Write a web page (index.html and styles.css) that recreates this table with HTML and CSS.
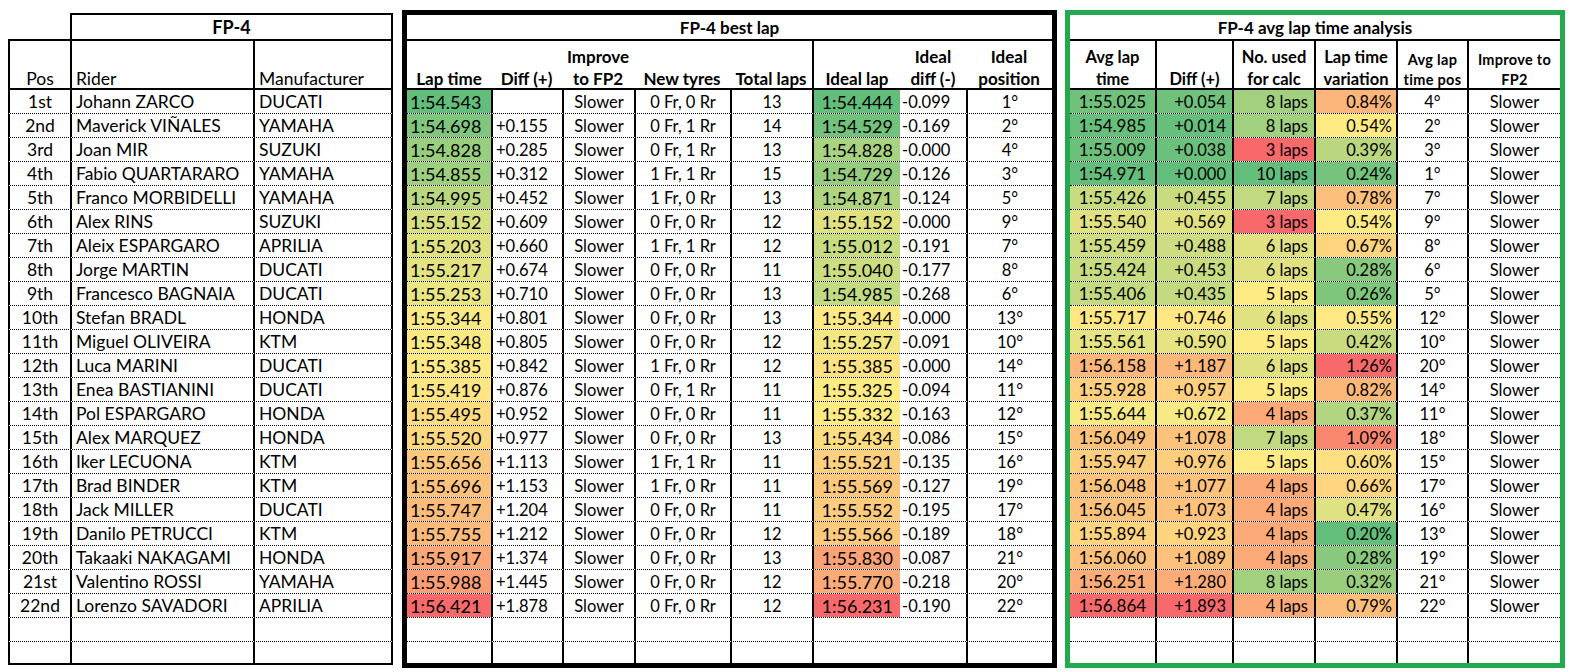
FILE: index.html
```html
<!DOCTYPE html>
<html lang="en">
<head>
<meta charset="utf-8">
<title>FP-4 analysis</title>
<link rel="stylesheet" href="styles.css">
</head>
<body>
<div class="sheet">

  <section class="panel left">
    <div class="row trow">
      <div class="c blank"></div>
      <div class="c ttl">FP-4</div>
    </div>
    <div class="row hrow">
      <div class="c h ctr"><span>Pos</span></div>
      <div class="c h vl pl"><span>Rider</span></div>
      <div class="c h vl pl"><span>Manufacturer</span></div>
    </div>
    <div class="row d"><div class="c ctr">1st</div><div class="c vl pl">Johann ZARCO</div><div class="c vl pl">DUCATI</div></div>
    <div class="row d"><div class="c ctr">2nd</div><div class="c vl pl">Maverick VIÑALES</div><div class="c vl pl">YAMAHA</div></div>
    <div class="row d"><div class="c ctr">3rd</div><div class="c vl pl">Joan MIR</div><div class="c vl pl">SUZUKI</div></div>
    <div class="row d"><div class="c ctr">4th</div><div class="c vl pl">Fabio QUARTARARO</div><div class="c vl pl">YAMAHA</div></div>
    <div class="row d"><div class="c ctr">5th</div><div class="c vl pl">Franco MORBIDELLI</div><div class="c vl pl">YAMAHA</div></div>
    <div class="row d"><div class="c ctr">6th</div><div class="c vl pl">Alex RINS</div><div class="c vl pl">SUZUKI</div></div>
    <div class="row d"><div class="c ctr">7th</div><div class="c vl pl">Aleix ESPARGARO</div><div class="c vl pl">APRILIA</div></div>
    <div class="row d"><div class="c ctr">8th</div><div class="c vl pl">Jorge MARTIN</div><div class="c vl pl">DUCATI</div></div>
    <div class="row d"><div class="c ctr">9th</div><div class="c vl pl">Francesco BAGNAIA</div><div class="c vl pl">DUCATI</div></div>
    <div class="row d"><div class="c ctr">10th</div><div class="c vl pl">Stefan BRADL</div><div class="c vl pl">HONDA</div></div>
    <div class="row d"><div class="c ctr">11th</div><div class="c vl pl">Miguel OLIVEIRA</div><div class="c vl pl">KTM</div></div>
    <div class="row d"><div class="c ctr">12th</div><div class="c vl pl">Luca MARINI</div><div class="c vl pl">DUCATI</div></div>
    <div class="row d"><div class="c ctr">13th</div><div class="c vl pl">Enea BASTIANINI</div><div class="c vl pl">DUCATI</div></div>
    <div class="row d"><div class="c ctr">14th</div><div class="c vl pl">Pol ESPARGARO</div><div class="c vl pl">HONDA</div></div>
    <div class="row d"><div class="c ctr">15th</div><div class="c vl pl">Alex MARQUEZ</div><div class="c vl pl">HONDA</div></div>
    <div class="row d"><div class="c ctr">16th</div><div class="c vl pl">Iker LECUONA</div><div class="c vl pl">KTM</div></div>
    <div class="row d"><div class="c ctr">17th</div><div class="c vl pl">Brad BINDER</div><div class="c vl pl">KTM</div></div>
    <div class="row d"><div class="c ctr">18th</div><div class="c vl pl">Jack MILLER</div><div class="c vl pl">DUCATI</div></div>
    <div class="row d"><div class="c ctr">19th</div><div class="c vl pl">Danilo PETRUCCI</div><div class="c vl pl">KTM</div></div>
    <div class="row d"><div class="c ctr">20th</div><div class="c vl pl">Takaaki NAKAGAMI</div><div class="c vl pl">HONDA</div></div>
    <div class="row d"><div class="c ctr">21st</div><div class="c vl pl">Valentino ROSSI</div><div class="c vl pl">YAMAHA</div></div>
    <div class="row d"><div class="c ctr">22nd</div><div class="c vl pl">Lorenzo SAVADORI</div><div class="c vl pl">APRILIA</div></div>
    <div class="row d"><div class="c"></div><div class="c vl"></div><div class="c vl"></div></div>
    <div class="row d end"><div class="c"></div><div class="c vl"></div><div class="c vl"></div></div>
  </section>

  <section class="panel mid">
    <div class="row trow"><div class="c ttl span-all">FP-4 best lap</div></div>
    <div class="row hrow">
      <div class="c h"><span>Lap time</span></div>
      <div class="c h"><span>Diff (+)</span></div>
      <div class="c h"><span>Improve<br>to FP2</span></div>
      <div class="c h"><span>New tyres</span></div>
      <div class="c h"><span>Total laps</span></div>
      <div class="c h vl"><span>Ideal lap</span></div>
      <div class="c h"><span>Ideal<br>diff (-)</span></div>
      <div class="c h"><span>Ideal<br>position</span></div>
    </div>
    <div class="row d"><div class="c lt" data-g="lt">1:54.543</div><div class="c vl df"></div><div class="c vl ctr">Slower</div><div class="c vl ctr">0 Fr, 0 Rr</div><div class="c vl ctr">13</div><div class="c vl il" data-g="il">1:54.444</div><div class="c idf">-0.099</div><div class="c vl ctr">1°</div></div>
    <div class="row d"><div class="c lt" data-g="lt">1:54.698</div><div class="c vl df">+0.155</div><div class="c vl ctr">Slower</div><div class="c vl ctr">0 Fr, 1 Rr</div><div class="c vl ctr">14</div><div class="c vl il" data-g="il">1:54.529</div><div class="c idf">-0.169</div><div class="c vl ctr">2°</div></div>
    <div class="row d"><div class="c lt" data-g="lt">1:54.828</div><div class="c vl df">+0.285</div><div class="c vl ctr">Slower</div><div class="c vl ctr">0 Fr, 1 Rr</div><div class="c vl ctr">13</div><div class="c vl il" data-g="il">1:54.828</div><div class="c idf">-0.000</div><div class="c vl ctr">4°</div></div>
    <div class="row d"><div class="c lt" data-g="lt">1:54.855</div><div class="c vl df">+0.312</div><div class="c vl ctr">Slower</div><div class="c vl ctr">1 Fr, 1 Rr</div><div class="c vl ctr">15</div><div class="c vl il" data-g="il">1:54.729</div><div class="c idf">-0.126</div><div class="c vl ctr">3°</div></div>
    <div class="row d"><div class="c lt" data-g="lt">1:54.995</div><div class="c vl df">+0.452</div><div class="c vl ctr">Slower</div><div class="c vl ctr">1 Fr, 0 Rr</div><div class="c vl ctr">13</div><div class="c vl il" data-g="il">1:54.871</div><div class="c idf">-0.124</div><div class="c vl ctr">5°</div></div>
    <div class="row d"><div class="c lt" data-g="lt">1:55.152</div><div class="c vl df">+0.609</div><div class="c vl ctr">Slower</div><div class="c vl ctr">0 Fr, 0 Rr</div><div class="c vl ctr">12</div><div class="c vl il" data-g="il">1:55.152</div><div class="c idf">-0.000</div><div class="c vl ctr">9°</div></div>
    <div class="row d"><div class="c lt" data-g="lt">1:55.203</div><div class="c vl df">+0.660</div><div class="c vl ctr">Slower</div><div class="c vl ctr">1 Fr, 1 Rr</div><div class="c vl ctr">12</div><div class="c vl il" data-g="il">1:55.012</div><div class="c idf">-0.191</div><div class="c vl ctr">7°</div></div>
    <div class="row d"><div class="c lt" data-g="lt">1:55.217</div><div class="c vl df">+0.674</div><div class="c vl ctr">Slower</div><div class="c vl ctr">0 Fr, 0 Rr</div><div class="c vl ctr">11</div><div class="c vl il" data-g="il">1:55.040</div><div class="c idf">-0.177</div><div class="c vl ctr">8°</div></div>
    <div class="row d"><div class="c lt" data-g="lt">1:55.253</div><div class="c vl df">+0.710</div><div class="c vl ctr">Slower</div><div class="c vl ctr">0 Fr, 0 Rr</div><div class="c vl ctr">13</div><div class="c vl il" data-g="il">1:54.985</div><div class="c idf">-0.268</div><div class="c vl ctr">6°</div></div>
    <div class="row d"><div class="c lt" data-g="lt">1:55.344</div><div class="c vl df">+0.801</div><div class="c vl ctr">Slower</div><div class="c vl ctr">0 Fr, 0 Rr</div><div class="c vl ctr">13</div><div class="c vl il" data-g="il">1:55.344</div><div class="c idf">-0.000</div><div class="c vl ctr">13°</div></div>
    <div class="row d"><div class="c lt" data-g="lt">1:55.348</div><div class="c vl df">+0.805</div><div class="c vl ctr">Slower</div><div class="c vl ctr">0 Fr, 0 Rr</div><div class="c vl ctr">12</div><div class="c vl il" data-g="il">1:55.257</div><div class="c idf">-0.091</div><div class="c vl ctr">10°</div></div>
    <div class="row d"><div class="c lt" data-g="lt">1:55.385</div><div class="c vl df">+0.842</div><div class="c vl ctr">Slower</div><div class="c vl ctr">1 Fr, 0 Rr</div><div class="c vl ctr">12</div><div class="c vl il" data-g="il">1:55.385</div><div class="c idf">-0.000</div><div class="c vl ctr">14°</div></div>
    <div class="row d"><div class="c lt" data-g="lt">1:55.419</div><div class="c vl df">+0.876</div><div class="c vl ctr">Slower</div><div class="c vl ctr">0 Fr, 1 Rr</div><div class="c vl ctr">11</div><div class="c vl il" data-g="il">1:55.325</div><div class="c idf">-0.094</div><div class="c vl ctr">11°</div></div>
    <div class="row d"><div class="c lt" data-g="lt">1:55.495</div><div class="c vl df">+0.952</div><div class="c vl ctr">Slower</div><div class="c vl ctr">0 Fr, 0 Rr</div><div class="c vl ctr">11</div><div class="c vl il" data-g="il">1:55.332</div><div class="c idf">-0.163</div><div class="c vl ctr">12°</div></div>
    <div class="row d"><div class="c lt" data-g="lt">1:55.520</div><div class="c vl df">+0.977</div><div class="c vl ctr">Slower</div><div class="c vl ctr">0 Fr, 0 Rr</div><div class="c vl ctr">13</div><div class="c vl il" data-g="il">1:55.434</div><div class="c idf">-0.086</div><div class="c vl ctr">15°</div></div>
    <div class="row d"><div class="c lt" data-g="lt">1:55.656</div><div class="c vl df">+1.113</div><div class="c vl ctr">Slower</div><div class="c vl ctr">1 Fr, 1 Rr</div><div class="c vl ctr">11</div><div class="c vl il" data-g="il">1:55.521</div><div class="c idf">-0.135</div><div class="c vl ctr">16°</div></div>
    <div class="row d"><div class="c lt" data-g="lt">1:55.696</div><div class="c vl df">+1.153</div><div class="c vl ctr">Slower</div><div class="c vl ctr">1 Fr, 0 Rr</div><div class="c vl ctr">11</div><div class="c vl il" data-g="il">1:55.569</div><div class="c idf">-0.127</div><div class="c vl ctr">19°</div></div>
    <div class="row d"><div class="c lt" data-g="lt">1:55.747</div><div class="c vl df">+1.204</div><div class="c vl ctr">Slower</div><div class="c vl ctr">0 Fr, 0 Rr</div><div class="c vl ctr">11</div><div class="c vl il" data-g="il">1:55.552</div><div class="c idf">-0.195</div><div class="c vl ctr">17°</div></div>
    <div class="row d"><div class="c lt" data-g="lt">1:55.755</div><div class="c vl df">+1.212</div><div class="c vl ctr">Slower</div><div class="c vl ctr">0 Fr, 0 Rr</div><div class="c vl ctr">12</div><div class="c vl il" data-g="il">1:55.566</div><div class="c idf">-0.189</div><div class="c vl ctr">18°</div></div>
    <div class="row d"><div class="c lt" data-g="lt">1:55.917</div><div class="c vl df">+1.374</div><div class="c vl ctr">Slower</div><div class="c vl ctr">0 Fr, 0 Rr</div><div class="c vl ctr">13</div><div class="c vl il" data-g="il">1:55.830</div><div class="c idf">-0.087</div><div class="c vl ctr">21°</div></div>
    <div class="row d"><div class="c lt" data-g="lt">1:55.988</div><div class="c vl df">+1.445</div><div class="c vl ctr">Slower</div><div class="c vl ctr">0 Fr, 0 Rr</div><div class="c vl ctr">12</div><div class="c vl il" data-g="il">1:55.770</div><div class="c idf">-0.218</div><div class="c vl ctr">20°</div></div>
    <div class="row d"><div class="c lt" data-g="lt">1:56.421</div><div class="c vl df">+1.878</div><div class="c vl ctr">Slower</div><div class="c vl ctr">0 Fr, 0 Rr</div><div class="c vl ctr">12</div><div class="c vl il" data-g="il">1:56.231</div><div class="c idf">-0.190</div><div class="c vl ctr">22°</div></div>
    <div class="row d"><div class="c"></div><div class="c vl"></div><div class="c vl"></div><div class="c vl"></div><div class="c vl"></div><div class="c vl"></div><div class="c"></div><div class="c vl"></div></div>
    <div class="row d end"><div class="c"></div><div class="c vl"></div><div class="c vl"></div><div class="c vl"></div><div class="c vl"></div><div class="c vl"></div><div class="c"></div><div class="c vl"></div></div>
  </section>

  <section class="panel grn">
    <div class="row trow"><div class="c ttl span-all">FP-4 avg lap time analysis</div></div>
    <div class="row hrow">
      <div class="c h gh"><span>Avg lap<br>time</span></div>
      <div class="c h gh vl"><span>Diff (+)</span></div>
      <div class="c h gh vl"><span>No. used<br>for calc</span></div>
      <div class="c h gh vl"><span>Lap time<br>variation</span></div>
      <div class="c h gh sm vl"><span>Avg lap<br>time pos</span></div>
      <div class="c h gh sm vl"><span>Improve to<br>FP2</span></div>
    </div>
    <div class="row d"><div class="c al" data-g="al">1:55.025</div><div class="c vl rt r6" data-g="ad">+0.054</div><div class="c vl rt r6" data-g="nu" data-hi>8 laps</div><div class="c vl rt r4" data-g="lv">0.84%</div><div class="c vl ctr">4°</div><div class="c vl ctr">Slower</div></div>
    <div class="row d"><div class="c al" data-g="al">1:54.985</div><div class="c vl rt r6" data-g="ad">+0.014</div><div class="c vl rt r6" data-g="nu" data-hi>8 laps</div><div class="c vl rt r4" data-g="lv">0.54%</div><div class="c vl ctr">2°</div><div class="c vl ctr">Slower</div></div>
    <div class="row d"><div class="c al" data-g="al">1:55.009</div><div class="c vl rt r6" data-g="ad">+0.038</div><div class="c vl rt r6" data-g="nu" data-hi>3 laps</div><div class="c vl rt r4" data-g="lv">0.39%</div><div class="c vl ctr">3°</div><div class="c vl ctr">Slower</div></div>
    <div class="row d"><div class="c al" data-g="al">1:54.971</div><div class="c vl rt r6" data-g="ad">+0.000</div><div class="c vl rt r6" data-g="nu" data-hi>10 laps</div><div class="c vl rt r4" data-g="lv">0.24%</div><div class="c vl ctr">1°</div><div class="c vl ctr">Slower</div></div>
    <div class="row d"><div class="c al" data-g="al">1:55.426</div><div class="c vl rt r6" data-g="ad">+0.455</div><div class="c vl rt r6" data-g="nu" data-hi>7 laps</div><div class="c vl rt r4" data-g="lv">0.78%</div><div class="c vl ctr">7°</div><div class="c vl ctr">Slower</div></div>
    <div class="row d"><div class="c al" data-g="al">1:55.540</div><div class="c vl rt r6" data-g="ad">+0.569</div><div class="c vl rt r6" data-g="nu" data-hi>3 laps</div><div class="c vl rt r4" data-g="lv">0.54%</div><div class="c vl ctr">9°</div><div class="c vl ctr">Slower</div></div>
    <div class="row d"><div class="c al" data-g="al">1:55.459</div><div class="c vl rt r6" data-g="ad">+0.488</div><div class="c vl rt r6" data-g="nu" data-hi>6 laps</div><div class="c vl rt r4" data-g="lv">0.67%</div><div class="c vl ctr">8°</div><div class="c vl ctr">Slower</div></div>
    <div class="row d"><div class="c al" data-g="al">1:55.424</div><div class="c vl rt r6" data-g="ad">+0.453</div><div class="c vl rt r6" data-g="nu" data-hi>6 laps</div><div class="c vl rt r4" data-g="lv">0.28%</div><div class="c vl ctr">6°</div><div class="c vl ctr">Slower</div></div>
    <div class="row d"><div class="c al" data-g="al">1:55.406</div><div class="c vl rt r6" data-g="ad">+0.435</div><div class="c vl rt r6" data-g="nu" data-hi>5 laps</div><div class="c vl rt r4" data-g="lv">0.26%</div><div class="c vl ctr">5°</div><div class="c vl ctr">Slower</div></div>
    <div class="row d"><div class="c al" data-g="al">1:55.717</div><div class="c vl rt r6" data-g="ad">+0.746</div><div class="c vl rt r6" data-g="nu" data-hi>6 laps</div><div class="c vl rt r4" data-g="lv">0.55%</div><div class="c vl ctr">12°</div><div class="c vl ctr">Slower</div></div>
    <div class="row d"><div class="c al" data-g="al">1:55.561</div><div class="c vl rt r6" data-g="ad">+0.590</div><div class="c vl rt r6" data-g="nu" data-hi>5 laps</div><div class="c vl rt r4" data-g="lv">0.42%</div><div class="c vl ctr">10°</div><div class="c vl ctr">Slower</div></div>
    <div class="row d"><div class="c al" data-g="al">1:56.158</div><div class="c vl rt r6" data-g="ad">+1.187</div><div class="c vl rt r6" data-g="nu" data-hi>6 laps</div><div class="c vl rt r4" data-g="lv">1.26%</div><div class="c vl ctr">20°</div><div class="c vl ctr">Slower</div></div>
    <div class="row d"><div class="c al" data-g="al">1:55.928</div><div class="c vl rt r6" data-g="ad">+0.957</div><div class="c vl rt r6" data-g="nu" data-hi>5 laps</div><div class="c vl rt r4" data-g="lv">0.82%</div><div class="c vl ctr">14°</div><div class="c vl ctr">Slower</div></div>
    <div class="row d"><div class="c al" data-g="al">1:55.644</div><div class="c vl rt r6" data-g="ad">+0.672</div><div class="c vl rt r6" data-g="nu" data-hi>4 laps</div><div class="c vl rt r4" data-g="lv">0.37%</div><div class="c vl ctr">11°</div><div class="c vl ctr">Slower</div></div>
    <div class="row d"><div class="c al" data-g="al">1:56.049</div><div class="c vl rt r6" data-g="ad">+1.078</div><div class="c vl rt r6" data-g="nu" data-hi>7 laps</div><div class="c vl rt r4" data-g="lv">1.09%</div><div class="c vl ctr">18°</div><div class="c vl ctr">Slower</div></div>
    <div class="row d"><div class="c al" data-g="al">1:55.947</div><div class="c vl rt r6" data-g="ad">+0.976</div><div class="c vl rt r6" data-g="nu" data-hi>5 laps</div><div class="c vl rt r4" data-g="lv">0.60%</div><div class="c vl ctr">15°</div><div class="c vl ctr">Slower</div></div>
    <div class="row d"><div class="c al" data-g="al">1:56.048</div><div class="c vl rt r6" data-g="ad">+1.077</div><div class="c vl rt r6" data-g="nu" data-hi>4 laps</div><div class="c vl rt r4" data-g="lv">0.66%</div><div class="c vl ctr">17°</div><div class="c vl ctr">Slower</div></div>
    <div class="row d"><div class="c al" data-g="al">1:56.045</div><div class="c vl rt r6" data-g="ad">+1.073</div><div class="c vl rt r6" data-g="nu" data-hi>4 laps</div><div class="c vl rt r4" data-g="lv">0.47%</div><div class="c vl ctr">16°</div><div class="c vl ctr">Slower</div></div>
    <div class="row d"><div class="c al" data-g="al">1:55.894</div><div class="c vl rt r6" data-g="ad">+0.923</div><div class="c vl rt r6" data-g="nu" data-hi>4 laps</div><div class="c vl rt r4" data-g="lv">0.20%</div><div class="c vl ctr">13°</div><div class="c vl ctr">Slower</div></div>
    <div class="row d"><div class="c al" data-g="al">1:56.060</div><div class="c vl rt r6" data-g="ad">+1.089</div><div class="c vl rt r6" data-g="nu" data-hi>4 laps</div><div class="c vl rt r4" data-g="lv">0.28%</div><div class="c vl ctr">19°</div><div class="c vl ctr">Slower</div></div>
    <div class="row d"><div class="c al" data-g="al">1:56.251</div><div class="c vl rt r6" data-g="ad">+1.280</div><div class="c vl rt r6" data-g="nu" data-hi>8 laps</div><div class="c vl rt r4" data-g="lv">0.32%</div><div class="c vl ctr">21°</div><div class="c vl ctr">Slower</div></div>
    <div class="row d"><div class="c al" data-g="al">1:56.864</div><div class="c vl rt r6" data-g="ad">+1.893</div><div class="c vl rt r6" data-g="nu" data-hi>4 laps</div><div class="c vl rt r4" data-g="lv">0.79%</div><div class="c vl ctr">22°</div><div class="c vl ctr">Slower</div></div>
    <div class="row d"><div class="c"></div><div class="c vl"></div><div class="c vl"></div><div class="c vl"></div><div class="c vl"></div><div class="c vl"></div></div>
    <div class="row d end"><div class="c"></div><div class="c vl"></div><div class="c vl"></div><div class="c vl"></div><div class="c vl"></div><div class="c vl"></div></div>
  </section>

</div>
<script src="script.js"></script>
</body>
</html>
```

FILE: styles.css
```css
* { box-sizing: border-box; }
html, body { margin: 0; padding: 0; background: #ffffff; }
body {
  font-family: Lato, "Open Sans", "Liberation Sans", sans-serif;
  color: #000;
  font-size: 16.5px;
}

.sheet {
  display: flex;
  align-items: flex-start;
  padding: 10px 0 0 8px;
}

.panel { display: flex; flex-direction: column; }

.left {
  width: 385px;
  margin-top: 3px;
  margin-right: 9px;
  font-size: 17.5px;
}
.mid {
  width: 655px;
  border: 5px solid #000;
  margin-right: 8px;
}
.grn {
  width: 500px;
  border: 5px solid #23a94e;
}

.row { display: grid; }

.left .row {
  grid-template-columns: 60px 183px 138px;
  border-left: 2px solid #000;
  border-right: 2px solid #000;
}
.left .trow {
  grid-template-columns: 62px 323px;
  border: none;
  height: 28px;
}
.mid .row { grid-template-columns: 84px 71px 72px 96px 82px 88px 66px 86px; }
.grn .row { grid-template-columns: 85px 77px 82px 82px 71px 93px; }

.c {
  display: flex;
  align-items: center;
  white-space: nowrap;
  overflow: hidden;
  min-width: 0;
}
.vl { border-left: 2px solid #000; }
.ctr { justify-content: center; }
.rt { justify-content: flex-end; }
.pl { padding-left: 4px; }
.r6 { padding-right: 6px; }
.r4 { padding-right: 4px; }

/* title rows */
.mid .trow, .grn .trow {
  height: 26px;
  grid-template-columns: 1fr;
  border-bottom: 2px solid #000;
}
.ttl {
  justify-content: center;
  font-weight: 700;
  font-size: 17px;
}
.left .blank { border-bottom: 2px solid #000; }
.left .ttl {
  border: 2px solid #000;
  font-size: 18px;
}

/* header rows */
.hrow {
  height: 49px;
  border-bottom: 2px solid #000;
}
.h {
  align-items: flex-end;
  justify-content: center;
  text-align: center;
  line-height: 22px;
  font-weight: 700;
  font-size: 17px;
}
.h span { margin-bottom: -2px; }
.left .h { font-weight: 400; font-size: 17.5px; }
.left .h.pl { justify-content: flex-start; }
.gh { font-size: 16.5px; line-height: 21.5px; }
.gh.sm { font-size: 14.5px; line-height: 20px; letter-spacing: 0.3px; }

/* data rows */
.d {
  height: 24px;
  border-bottom: 1px dotted #000;
}
.left .d.end { height: 23px; border-bottom: 2px solid #000; }
.mid .d.end, .grn .d.end { height: 21px; border-bottom: none; }

.lt { font-size: 18px; padding-left: 3px; }
.df { padding-left: 3px; }
.il { font-size: 18px; justify-content: flex-end; padding-right: 7px; }
.idf { padding-left: 2px; }
.al { font-size: 17px; justify-content: center; }
```

FILE: script.js
```js
(function () {
  var G = [99, 190, 123], Y = [255, 235, 132], R = [248, 105, 107];
  function val(t) {
    t = t.trim();
    var m = t.match(/^(\d+):(\d+(?:\.\d+)?)$/);
    if (m) return parseFloat(m[1]) * 60 + parseFloat(m[2]);
    return parseFloat(t);
  }
  function mix(a, b, t) {
    if (t < 0) t = 0; if (t > 1) t = 1;
    var out = [];
    for (var i = 0; i < 3; i++) out.push(Math.round(a[i] + (b[i] - a[i]) * t));
    return 'rgb(' + out.join(',') + ')';
  }
  var groups = {};
  var cells = document.querySelectorAll('[data-g]');
  for (var i = 0; i < cells.length; i++) {
    var k = cells[i].getAttribute('data-g');
    (groups[k] = groups[k] || []).push(cells[i]);
  }
  Object.keys(groups).forEach(function (k) {
    var els = groups[k];
    var vs = els.map(function (e) { return val(e.textContent); });
    var s = vs.slice().sort(function (a, b) { return a - b; });
    var n = s.length, min = s[0], max = s[n - 1];
    var p = (n - 1) * 0.5, lo = Math.floor(p);
    var mid = s[lo] + (s[Math.min(lo + 1, n - 1)] - s[lo]) * (p - lo);
    var hiGood = els[0].hasAttribute('data-hi');
    var lowC = hiGood ? R : G, highC = hiGood ? G : R;
    els.forEach(function (e, j) {
      var v = vs[j], c;
      if (v <= mid) c = mix(lowC, Y, mid > min ? (v - min) / (mid - min) : 1);
      else c = mix(Y, highC, max > mid ? (v - mid) / (max - mid) : 0);
      e.style.backgroundColor = c;
    });
  });
})();
```
